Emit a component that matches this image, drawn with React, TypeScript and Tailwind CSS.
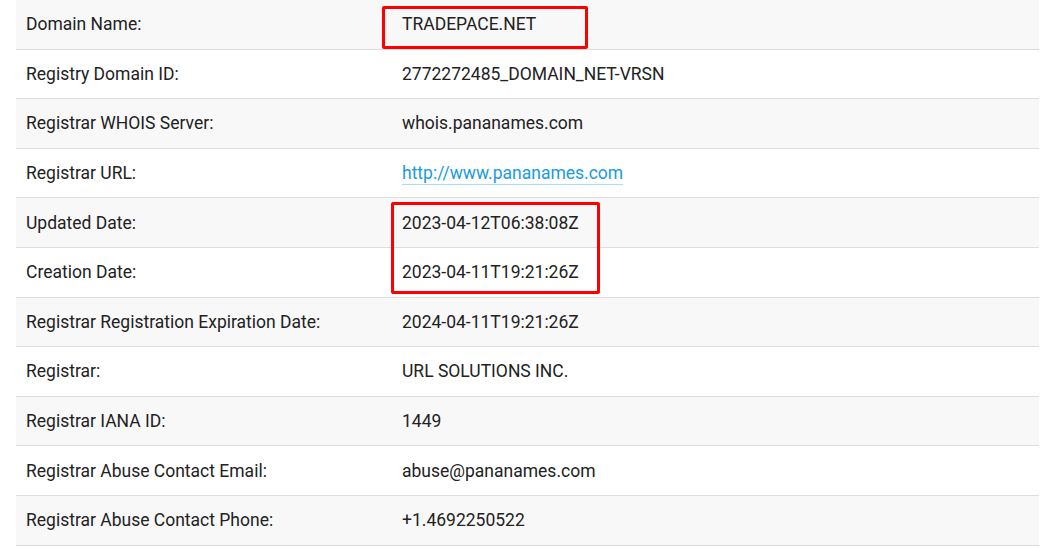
import React from "react"

type Row = { label: string; value: string; link?: boolean }

const rows: Row[] = [
	{ label: "Domain Name:", value: "TRADEPACE.NET" },
	{ label: "Registry Domain ID:", value: "2772272485_DOMAIN_NET-VRSN" },
	{ label: "Registrar WHOIS Server:", value: "whois.pananames.com" },
	{ label: "Registrar URL:", value: "http://www.pananames.com", link: true },
	{ label: "Updated Date:", value: "2023-04-12T06:38:08Z" },
	{ label: "Creation Date:", value: "2023-04-11T19:21:26Z" },
	{ label: "Registrar Registration Expiration Date:", value: "2024-04-11T19:21:26Z" },
	{ label: "Registrar:", value: "URL SOLUTIONS INC." },
	{ label: "Registrar IANA ID:", value: "1449" },
	{ label: "Registrar Abuse Contact Email:", value: "abuse@pananames.com" },
	{ label: "Registrar Abuse Contact Phone:", value: "+1.4692250522" },
]

const App = (): JSX.Element => {
	return (
		<div className="h-[548px] w-[1052px] bg-white font-['Roboto',sans-serif] text-[17.5px] text-[#222]">
			<div className="relative ml-[16px] w-[1023px]">
				{rows.map((row, i) => (
					<div
						key={row.label}
						className={`flex h-[49.6px] items-center border-b border-[#dedede] ${
							i % 2 === 0 ? "bg-[#f8f8f8]" : "bg-white"
						}`}
					>
						<div className="w-[386px] pl-[10px]">{row.label}</div>
						<div>
							{row.link ? (
								<a className="border-b border-[#a9dcf5] pb-[1px] text-[#1a9be0]">{row.value}</a>
							) : (
								row.value
							)}
						</div>
					</div>
				))}
				<div className="absolute left-[366px] top-[6px] h-[43px] w-[206px] rounded-[2px] border-[3px] border-[#ff0000]" />
				<div className="absolute left-[375px] top-[202px] h-[92px] w-[209px] rounded-[2px] border-[3px] border-[#ff0000]" />
			</div>
		</div>
	)
}

export default App
